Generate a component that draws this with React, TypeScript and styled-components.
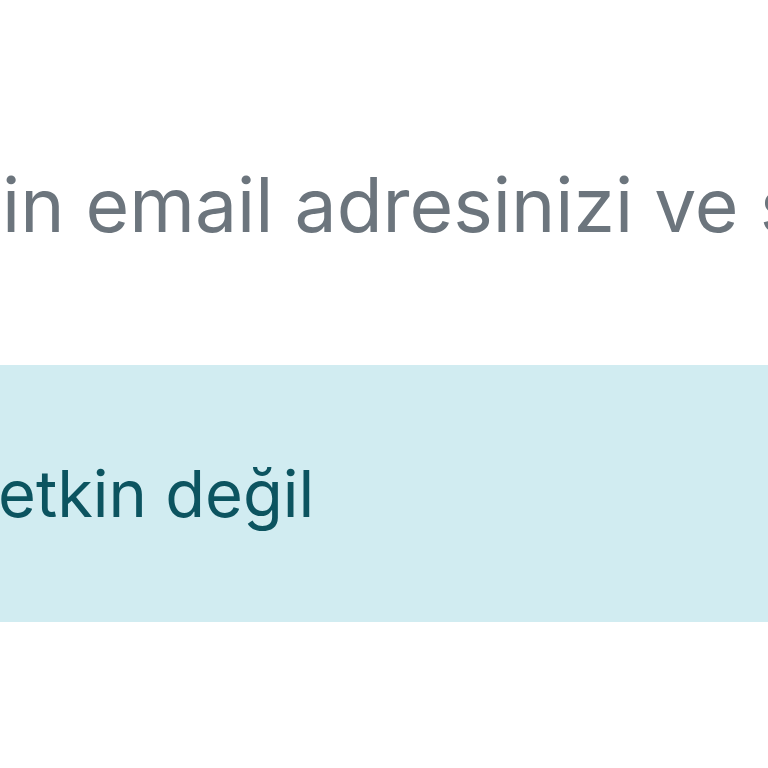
import * as React from 'react'
import styled, { createGlobalStyle } from 'styled-components'

const GlobalStyle = createGlobalStyle`
  html, body {
    margin: 0;
    padding: 0;
    background: #ffffff;
    overflow: hidden;
  }
`

export default function App() {
  return (
    <Page>
      <GlobalStyle />
      <Lead>in email adresinizi ve şifrenizi girin</Lead>
      <Alert>
        <AlertText>etkin değil</AlertText>
      </Alert>
    </Page>
  )
}

const Page = styled.main`
  width: 768px;
  height: 768px;
  overflow: hidden;
  padding-top: 160px;
  box-sizing: border-box;
  font-family: Inter, 'Liberation Sans', sans-serif;
`

const Lead = styled.p`
  margin: 0 0 0 2px;
  font-size: 75px;
  line-height: 90px;
  color: #6c757d;
  white-space: nowrap;
`

const Alert = styled.div`
  margin-top: 115px;
  height: 257px;
  background: #d1ecf1;
  display: flex;
  align-items: center;
`

const AlertText = styled.span`
  font-size: 65px;
  line-height: 76px;
  color: #0c5460;
  white-space: nowrap;
  margin-left: -2px;
`
